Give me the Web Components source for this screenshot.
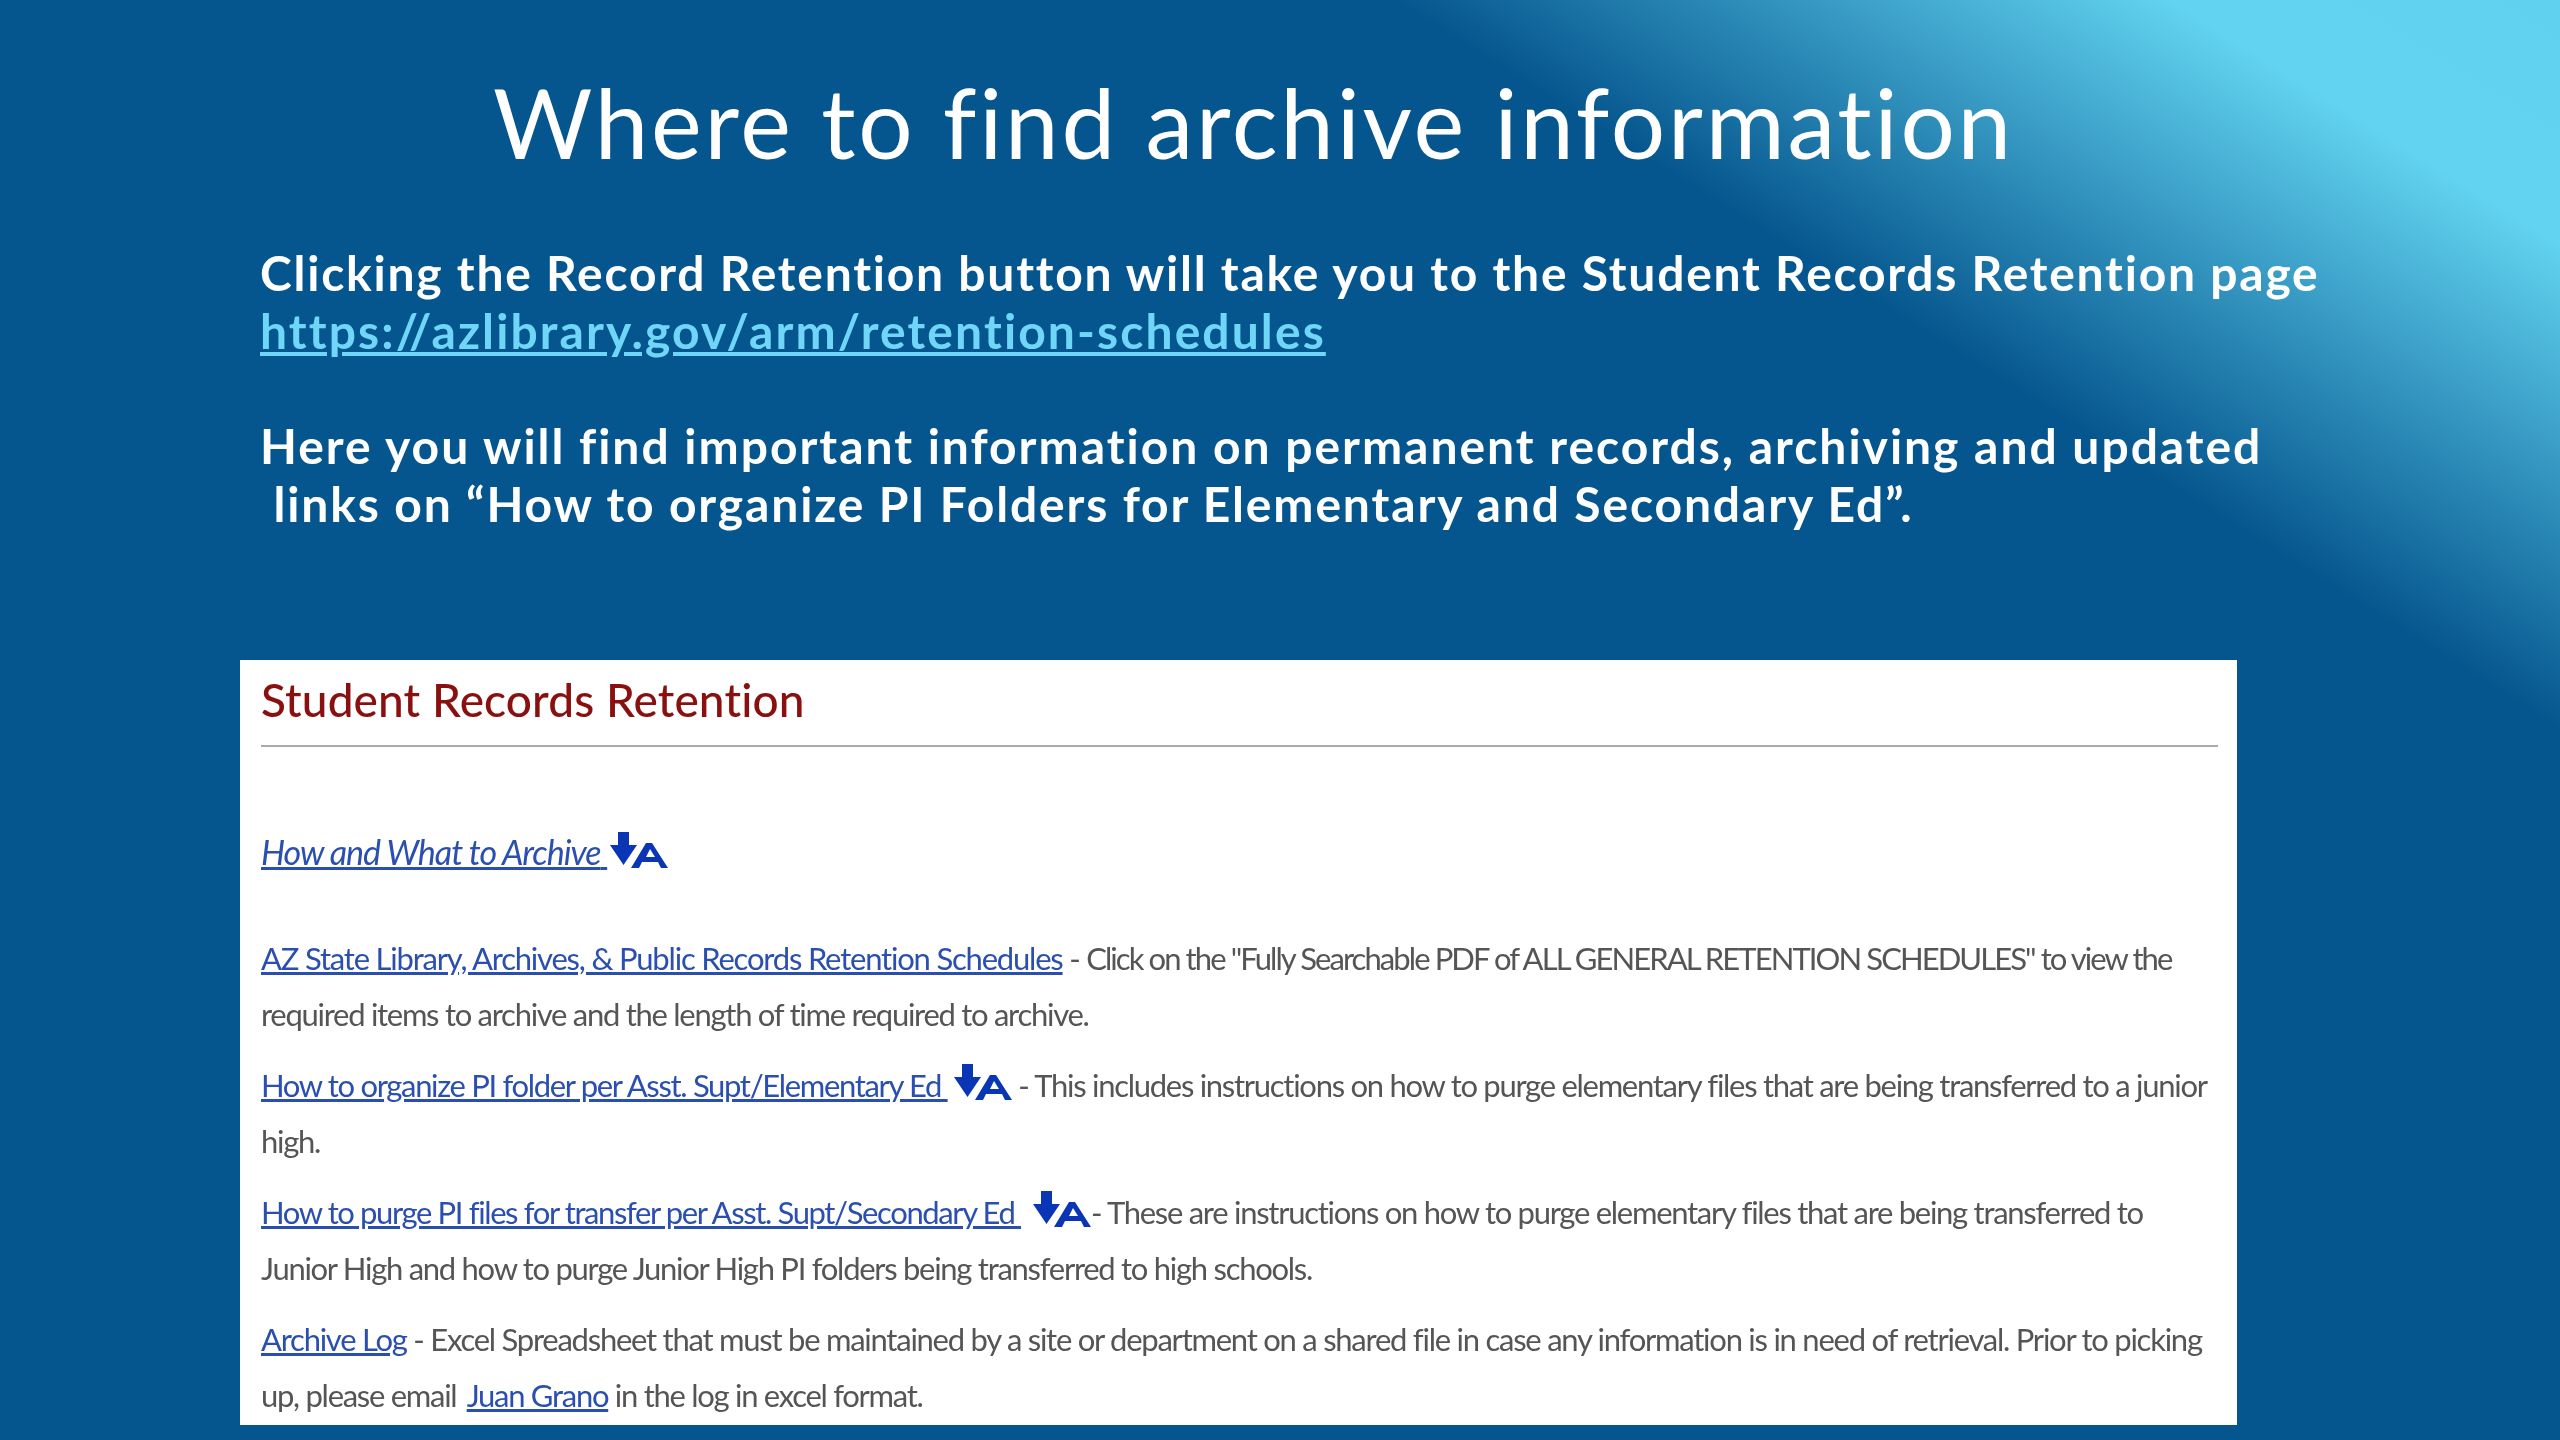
<!DOCTYPE html>
<html>
<head>
<meta charset="utf-8">
<title>Where to find archive information</title>
<style>
  html, body { margin: 0; padding: 0; }
  body { width: 2560px; height: 1440px; overflow: hidden; }
  doc-entry a { color: #2a4fb0; }
  doc-entry i { font-size: 34px; letter-spacing: -1.05px; }
  .caps { letter-spacing: -1.92px; }
  .url { color: #6fd6f7; letter-spacing: 2.1px; }
  .spread { letter-spacing: 1.98px; }
  .spread2 { letter-spacing: 1.85px; }
  .tight { letter-spacing: -1.38px; }
</style>
</head>
<body>
<archive-slide>
  <slide-title slot="title">Where to find archive information</slide-title>
  <slide-para>
    <span>Clicking the Record Retention button will take you to the Student Records Retention page</span>
    <a class="url" href="#">https://azlibrary.gov/arm/retention-schedules</a>
  </slide-para>
  <slide-para>
    <span class="spread">Here you will find important information on permanent records, archiving and updated</span>
    <span class="spread2" style="white-space:pre"> links on “How to organize PI Folders for Elementary and Secondary Ed”.</span>
  </slide-para>
  <retention-card slot="card" heading="Student Records Retention">
    <doc-entry first>
      <div><a href="#"><i>How and What to Archive</i> <pdf-icon style="margin-left:3px"></pdf-icon></a></div>
    </doc-entry>
    <doc-entry>
      <div><a href="#" style="letter-spacing:-1.2px">AZ State Library, Archives, &amp; Public Records Retention Schedules</a> - <span class="caps">Click on the "Fully Searchable PDF of ALL GENERAL RETENTION SCHEDULES" to view the</span></div>
      <div>required items to archive and the length of time required to archive.</div>
    </doc-entry>
    <doc-entry>
      <div><a href="#" style="letter-spacing:-1.33px">How to organize PI folder per Asst. Supt/Elementary Ed <pdf-icon></pdf-icon></a> - This includes instructions on how to purge elementary files that are being transferred to a junior</div>
      <div>high.</div>
    </doc-entry>
    <doc-entry>
      <div><a href="#" class="tight">How to purge PI files for transfer per Asst. Supt/Secondary Ed </a> <a href="#" style="margin-left:6px"><pdf-icon></pdf-icon></a>- These are instructions on how to purge elementary files that are being transferred to</div>
      <div>Junior High and how to purge Junior High PI folders being transferred to high schools.</div>
    </doc-entry>
    <doc-entry>
      <div style="letter-spacing:-1.25px"><a href="#">Archive Log</a> - Excel Spreadsheet that must be maintained by a site or department on a shared file in case any information is in need of retrieval. Prior to picking</div>
      <div>up, please email&nbsp; <a href="#" style="margin-left:-3px">Juan Grano</a> in the log in excel format.</div>
    </doc-entry>
  </retention-card>
</archive-slide>

<script>
class ArchiveSlide extends HTMLElement {
  constructor() {
    super();
    this.attachShadow({mode: 'open'});
    this.shadowRoot.innerHTML = `
      <style>
        :host {
          display: flex;
          flex-direction: column;
          box-sizing: border-box;
          width: 2560px;
          height: 1440px;
          overflow: hidden;
          background: linear-gradient(32deg, #05568e 0%, #05568e 76%, #62d3f0 92%, #60d1ef 100%);
        }
        .paras {
          display: flex;
          flex-direction: column;
          gap: 57px;
          padding: 72px 0 0 260px;
          filter: blur(.5px);
        }
        .card { padding: 127px 0 0 240px; filter: blur(.6px); }
      </style>
      <slot name="title"></slot>
      <div class="paras"><slot></slot></div>
      <div class="card"><slot name="card"></slot></div>
    `;
  }
}

class SlideTitle extends HTMLElement {
  constructor() {
    super();
    this.attachShadow({mode: 'open'});
    this.shadowRoot.innerHTML = `
      <style>
        :host {
          display: block;
          padding: 72px 0 0 493px;
          font: 400 96px/100px Lato, "Open Sans", sans-serif;
          letter-spacing: 2.8px;
          color: #fff;
          white-space: nowrap;
        }
      </style>
      <slot></slot>
    `;
  }
}

class SlidePara extends HTMLElement {
  constructor() {
    super();
    this.attachShadow({mode: 'open'});
    this.shadowRoot.innerHTML = `
      <style>
        :host {
          display: flex;
          flex-direction: column;
          align-items: flex-start;
          font: 700 48px/58px Lato, "Open Sans", sans-serif;
          letter-spacing: 1.76px;
          color: #fff;
          white-space: nowrap;
        }
      </style>
      <slot></slot>
    `;
  }
}

class RetentionCard extends HTMLElement {
  constructor() {
    super();
    this.attachShadow({mode: 'open'});
    this.shadowRoot.innerHTML = `
      <style>
        :host {
          display: block;
          box-sizing: border-box;
          width: 1997px;
          height: 765px;
          padding: 0 19px 0 21px;
          background: #fff;
          overflow: hidden;
        }
        h2 {
          margin: 0;
          padding: 11px 0 16px;
          font: 500 46px/58px Lato, "Open Sans", sans-serif;
          letter-spacing: 0.1px;
          color: #8a1010;
          border-bottom: 2px solid #aaa;
        }
        .body {
          display: flex;
          flex-direction: column;
        }
      </style>
      <h2></h2>
      <div class="body"><slot></slot></div>
    `;
    this.shadowRoot.querySelector('h2').textContent = this.getAttribute('heading');
  }
}

class DocEntry extends HTMLElement {
  constructor() {
    super();
    this.attachShadow({mode: 'open'});
    this.shadowRoot.innerHTML = `
      <style>
        :host {
          display: block;
          margin-top: 15px;
          font: 400 31px/56px Lato, "Open Sans", sans-serif;
          letter-spacing: -1.28px;
          color: #555;
          white-space: nowrap;
        }
        :host([first]) {
          margin-top: 77px;
          margin-bottom: 34px;
        }
      </style>
      <slot></slot>
    `;
  }
}

class PdfIcon extends HTMLElement {
  constructor() {
    super();
    this.attachShadow({mode: 'open'});
    this.shadowRoot.innerHTML = `
      <style>
        :host {
          display: inline-block;
          width: 58px;
          height: 38px;
          margin-left: 6px;
          vertical-align: -5px;
        }
        svg { display: block; }
      </style>
      <svg width="58" height="38" viewBox="0 0 58 38">
        <path fill="#0a35b4" d="M8 0h11v13h8L13.500 33 0 13h8z"/>
        <path fill="#0a35b4" fill-rule="evenodd" d="M21 36 36 11h6l16 25h-7l-3-6H32l-3 6zM36 25h9l-5-8z"/>
      </svg>
    `;
  }
}

customElements.define('archive-slide', ArchiveSlide);
customElements.define('slide-title', SlideTitle);
customElements.define('slide-para', SlidePara);
customElements.define('retention-card', RetentionCard);
customElements.define('doc-entry', DocEntry);
customElements.define('pdf-icon', PdfIcon);
</script>
</body>
</html>
